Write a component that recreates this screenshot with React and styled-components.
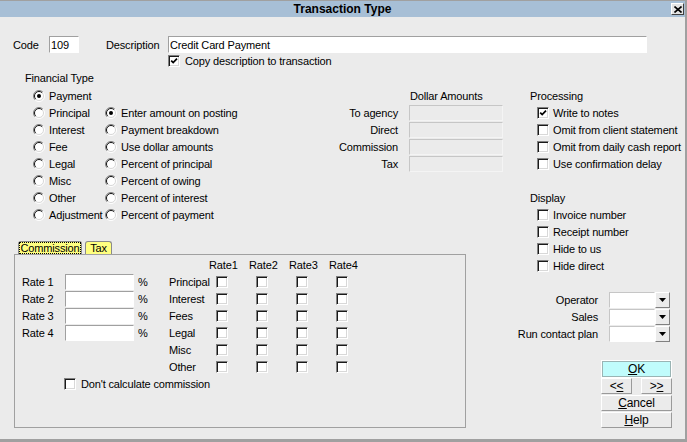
import styled, { createGlobalStyle } from 'styled-components';

const GlobalStyle = createGlobalStyle`
  html, body {
    margin: 0;
    padding: 0;
    background: #ebebeb;
  }
  body {
    font-family: "Liberation Sans", Arial, sans-serif;
    font-size: 11px;
    letter-spacing: -0.15px;
    color: #000;
  }
`;

const finRows = [
  ['Payment', null],
  ['Principal', 'Enter amount on posting'],
  ['Interest', 'Payment breakdown'],
  ['Fee', 'Use dollar amounts'],
  ['Legal', 'Percent of principal'],
  ['Misc', 'Percent of owing'],
  ['Other', 'Percent of interest'],
  ['Adjustment', 'Percent of payment'],
];
const checkedRadios = ['Payment', 'Enter amount on posting'];
const dollarRows = ['To agency', 'Direct', 'Commission', 'Tax'];
const processing = [
  ['Write to notes', true],
  ['Omit from client statement', false],
  ['Omit from daily cash report', false],
  ['Use confirmation delay', false],
];
const display = ['Invoice number', 'Receipt number', 'Hide to us', 'Hide direct'];
const matrixRows = ['Principal', 'Interest', 'Fees', 'Legal', 'Misc', 'Other'];
const combos = ['Operator', 'Sales', 'Run contact plan'];

const Box = styled.span`
  flex: none;
  width: 12px;
  height: 12px;
  box-sizing: border-box;
  border: 1px solid;
  border-color: #808080 #fff #fff #808080;
  box-shadow: inset 1px 1px 0 #1a1a1a, inset -1px -1px 0 #d8d8d8;
  background: #fff;
  display: flex;
  align-items: center;
  justify-content: center;
`;

const CheckBox = ({ checked }) => (
  <Box>
    {checked && (
      <svg width="8" height="8" viewBox="0 0 8 8">
        <path d="M1.2 3.6 L3.2 5.6 L7 1.6" stroke="#000" strokeWidth="1.7" fill="none" />
      </svg>
    )}
  </Box>
);

const Radio = ({ checked }) => (
  <svg width="12" height="12" viewBox="0 0 12 12" style={{ flex: 'none' }}>
    <circle cx="6" cy="6" r="5" fill="#fff" />
    <path d="M2.1 9.9 A5.5 5.5 0 0 1 9.9 2.1" stroke="#808080" fill="none" />
    <path d="M2.8 9.2 A4.5 4.5 0 0 1 9.2 2.8" stroke="#111" fill="none" />
    <path d="M9.9 2.1 A5.5 5.5 0 0 1 2.1 9.9" stroke="#fff" fill="none" />
    <path d="M9.2 2.8 A4.5 4.5 0 0 1 2.8 9.2" stroke="#d8d8d8" fill="none" />
    {checked && <circle cx="6" cy="6" r="2" fill="#000" />}
  </svg>
);

const Window = styled.div`
  width: 687px;
  height: 442px;
  box-sizing: border-box;
  border-top: 1px solid #a0a0a0;
  border-right: 2px solid #a0a0a0;
  border-bottom: 3px solid #a0a0a0;
  background: #ebebeb;
  display: flex;
  flex-direction: column;
`;

const TitleBar = styled.div`
  height: 16px;
  background: #a7bfd6;
  display: grid;
  grid-template-columns: 1fr auto 1fr;
  align-items: center;
`;

const Title = styled.div`
  grid-column: 2;
  font-weight: bold;
  font-size: 12px;
  letter-spacing: 0;
`;

const CloseButton = styled.div`
  grid-column: 3;
  justify-self: end;
  margin-right: 1px;
  width: 13px;
  height: 12px;
  box-sizing: border-box;
  background: #e4e4e4;
  border: 1px solid;
  border-color: #fff #404040 #404040 #fff;
  display: flex;
  align-items: center;
  justify-content: center;
`;

const TopRow = styled.div`
  margin-top: 19px;
  height: 17px;
  display: flex;
  align-items: center;
`;

const Label = styled.span`
  flex: none;
  width: ${(p) => p.$w || 'auto'};
  margin-left: ${(p) => p.$ml || 0};
  white-space: nowrap;
`;

const TextInput = styled.input`
  width: ${(p) => p.$w};
  height: ${(p) => p.$h || '16px'};
  box-sizing: border-box;
  margin: 0;
  padding: 0 1px;
  font: inherit;
  letter-spacing: inherit;
  color: #000;
  background: #fff;
  border: 1px solid;
  border-color: #a0a0a0 #fff #fff #a0a0a0;
  outline: none;
`;

const DisabledInput = styled.div`
  width: 94px;
  height: 16px;
  box-sizing: border-box;
  border: 1px solid #c6c6c6;
  border-right-color: #f4f4f4;
  border-bottom-color: #f4f4f4;
`;

const CheckItem = styled.div`
  display: flex;
  align-items: center;
  gap: ${(p) => p.$gap || '5px'};
  height: ${(p) => p.$h || '17px'};
  margin-left: ${(p) => p.$ml || 0};
  padding-left: ${(p) => p.$pl || 0};
  white-space: nowrap;
`;

const Main = styled.div`
  margin-top: 2px;
  display: flex;
`;

const LeftArea = styled.div`
  width: 516px;
  display: flex;
  flex-direction: column;
`;

const Upper = styled.div`
  display: flex;
`;

const Financial = styled.div`
  margin-left: 25px;
  width: 295px;
  display: flex;
  flex-direction: column;
`;

const SectionTitle = styled.div`
  height: 17px;
  line-height: 17px;
  white-space: nowrap;
`;

const RadioGrid = styled.div`
  padding-left: 8px;
  display: grid;
  grid-template-columns: 72px auto;
  grid-auto-rows: 17px;
  align-items: center;
`;

const RadioItem = styled.div`
  display: flex;
  align-items: center;
  gap: 4px;
  white-space: nowrap;
`;

const Dollars = styled.div`
  margin-top: 17px;
  display: grid;
  grid-template-columns: 78px 94px;
  column-gap: 11px;
  grid-auto-rows: 17px;
  align-items: center;
  align-content: start;
  justify-items: end;
`;

const DollarHead = styled.span`
  grid-column: 2;
  justify-self: start;
  padding-left: 1px;
`;

const TabStrip = styled.div`
  margin: 18px 0 0 18px;
  height: 13px;
  display: flex;
  gap: 3px;
`;

const Tab = styled.div`
  width: ${(p) => p.$w};
  height: 13px;
  box-sizing: border-box;
  border: 1px solid #8a8a8a;
  border-bottom: none;
  border-radius: 3px 3px 0 0;
  background: #ffff80;
  line-height: 12px;
  text-align: center;
`;

const Focus = styled.span`
  outline: 1px dotted #000;
  outline-offset: -1px;
  padding: 0 1px;
`;

const Panel = styled.div`
  margin-left: 14px;
  width: 452px;
  height: 174px;
  box-sizing: border-box;
  border: 1px solid #a0a0a0;
  padding: 1px 0 0 7px;
  display: grid;
  grid-template-columns: 43px 69px 35px 40px repeat(4, 40px);
  grid-auto-rows: 17px;
  align-content: start;
  align-items: center;
`;

const Cell = styled.div`
  display: flex;
  align-items: center;
  padding-left: ${(p) => p.$pl || 0};
  white-space: nowrap;
`;

const WideCell = styled(CheckItem)`
  grid-column: 2 / -1;
  margin-left: -1px;
`;

const RightArea = styled.div`
  width: 169px;
  display: flex;
  flex-direction: column;
`;

const Group = styled.div`
  margin-top: 17px;
  padding-left: 14px;
  display: grid;
  grid-auto-rows: 17px;
  align-items: center;
`;

const ComboGrid = styled.div`
  margin: 17px 15px 0 0;
  display: grid;
  grid-template-columns: max-content 61px;
  column-gap: 11px;
  grid-auto-rows: 17px;
  align-items: center;
  justify-content: end;
  justify-items: end;
`;

const Combo = styled.div`
  display: flex;
  height: 16px;
`;

const ComboField = styled.div`
  width: 46px;
  box-sizing: border-box;
  background: #fff;
  border: 1px solid;
  border-color: #c6c6c6 #fff #fff #c6c6c6;
`;

const DropButton = styled.div`
  width: 15px;
  box-sizing: border-box;
  background: #ebebeb;
  border: 1px solid;
  border-color: #fff #808080 #808080 #fff;
  display: flex;
  align-items: center;
  justify-content: center;
`;

const ButtonStack = styled.div`
  margin: 19px 13px 0 0;
  align-self: flex-end;
  width: 71px;
  display: flex;
  flex-direction: column;
  gap: 1px;
`;

const ButtonRow = styled.div`
  display: flex;
  justify-content: space-between;
`;

const Button = styled.div`
  width: ${(p) => p.$w || 'auto'};
  height: 16px;
  box-sizing: border-box;
  background: ${(p) => (p.$primary ? '#c0fcfc' : '#ebebeb')};
  border: 1px solid;
  border-color: ${(p) => (p.$primary ? '#9ab4b4' : '#fff #9a9a9a #9a9a9a #fff')};
  box-shadow: ${(p) => (p.$primary ? '0 0 0 1px #fff' : 'none')};
  margin: ${(p) => (p.$primary ? '0 1px' : 0)};
  line-height: 14px;
  text-align: center;
  font-size: 12px;
`;

export default function App() {
  return (
    <Window>
      <GlobalStyle />
      <TitleBar>
        <Title>Transaction Type</Title>
        <CloseButton>
          <svg width="8" height="7" viewBox="0 0 8 7">
            <path d="M0.5 0.5 L7.5 6.5 M7.5 0.5 L0.5 6.5" stroke="#000" strokeWidth="1.6" />
          </svg>
        </CloseButton>
      </TitleBar>

      <TopRow>
        <Label $ml="13px" $w="36px">Code</Label>
        <TextInput $w="30px" $h="17px" defaultValue="109" />
        <Label $ml="27px" $w="62px">Description</Label>
        <TextInput $w="479px" $h="17px" defaultValue="Credit Card Payment" />
      </TopRow>
      <CheckItem $ml="168px" $h="14px" style={{ marginTop: 1 }}>
        <CheckBox checked />
        <span>Copy description to transaction</span>
      </CheckItem>

      <Main>
        <LeftArea>
          <Upper>
            <Financial>
              <SectionTitle>Financial Type</SectionTitle>
              <RadioGrid>
                {finRows.map(([a, b]) => [
                  <RadioItem key={a}>
                    <Radio checked={checkedRadios.includes(a)} />
                    <span>{a}</span>
                  </RadioItem>,
                  <RadioItem key={a + '-2'}>
                    {b && <Radio checked={checkedRadios.includes(b)} />}
                    {b && <span>{b}</span>}
                  </RadioItem>,
                ])}
              </RadioGrid>
            </Financial>
            <Dollars>
              <DollarHead>Dollar Amounts</DollarHead>
              {dollarRows.map((d) => [
                <Label key={d}>{d}</Label>,
                <DisabledInput key={d + '-in'} />,
              ])}
            </Dollars>
          </Upper>

          <TabStrip>
            <Tab $w="64px">
              <Focus>Commission</Focus>
            </Tab>
            <Tab $w="27px">Tax</Tab>
          </TabStrip>
          <Panel>
            <Cell />
            <Cell />
            <Cell />
            <Cell />
            {[1, 2, 3, 4].map((n) => (
              <Cell key={'h' + n}>Rate{n}</Cell>
            ))}
            {matrixRows.map((row, i) => [
              <Cell key={row + 'a'}>{i < 4 ? `Rate ${i + 1}` : ''}</Cell>,
              <Cell key={row + 'b'}>{i < 4 && <TextInput $w="69px" />}</Cell>,
              <Cell key={row + 'c'} $pl="4px">{i < 4 ? '%' : ''}</Cell>,
              <Cell key={row + 'd'}>{row}</Cell>,
              ...[1, 2, 3, 4].map((n) => (
                <Cell key={row + n} $pl="7px">
                  <CheckBox />
                </Cell>
              )),
            ])}
            <Cell />
            <WideCell>
              <CheckBox />
              <span>Don't calculate commission</span>
            </WideCell>
          </Panel>
        </LeftArea>

        <RightArea>
          <Group>
            <span>Processing</span>
            {processing.map(([t, c]) => (
              <CheckItem key={t} $pl="7px" $gap="4px">
                <CheckBox checked={c} />
                <span>{t}</span>
              </CheckItem>
            ))}
          </Group>
          <Group>
            <span>Display</span>
            {display.map((t) => (
              <CheckItem key={t} $pl="7px" $gap="4px">
                <CheckBox />
                <span>{t}</span>
              </CheckItem>
            ))}
          </Group>
          <ComboGrid>
            {combos.map((c) => [
              <Label key={c}>{c}</Label>,
              <Combo key={c + '-cb'}>
                <ComboField />
                <DropButton>
                  <svg width="7" height="4" viewBox="0 0 7 4">
                    <polygon points="0,0 7,0 3.5,4" fill="#000" />
                  </svg>
                </DropButton>
              </Combo>,
            ])}
          </ComboGrid>
          <ButtonStack>
            <Button $primary>
              <u>O</u>K
            </Button>
            <ButtonRow>
              <Button $w="31px">
                &lt;<u>&lt;</u>
              </Button>
              <Button $w="31px">
                &gt;<u>&gt;</u>
              </Button>
            </ButtonRow>
            <Button>
              <u>C</u>ancel
            </Button>
            <Button>
              <u>H</u>elp
            </Button>
          </ButtonStack>
        </RightArea>
      </Main>
    </Window>
  );
}
